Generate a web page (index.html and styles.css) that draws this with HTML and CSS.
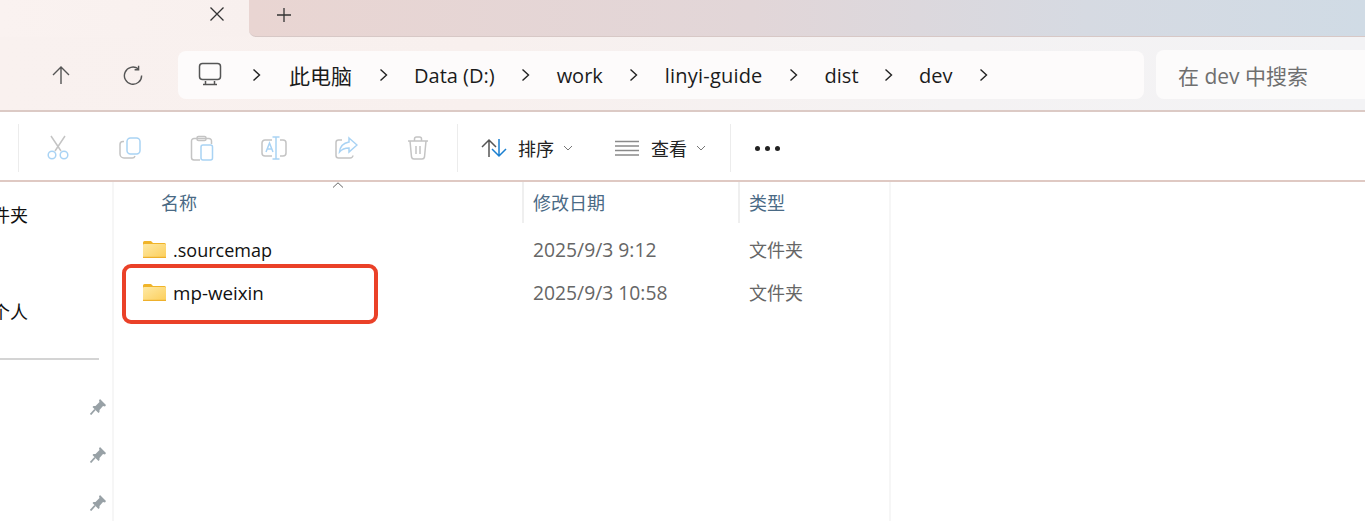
FILE: index.html
```html
<!DOCTYPE html>
<html lang="zh-CN">
<head>
<meta charset="utf-8">
<title>dev - 文件资源管理器</title>
<link rel="stylesheet" href="styles.css">
</head>
<body>
<div class="window">
  <header class="tabstrip">
    <div class="tab">
      <svg class="tab-close" width="16" height="16" viewBox="0 0 16 16"><path d="M1.5 1.5l13 13M14.5 1.5l-13 13"/></svg>
    </div>
    <div class="tab-rest">
      <svg class="tab-plus" width="16" height="16" viewBox="0 0 16 16"><path d="M8 1v14M1 8h14"/></svg>
    </div>
  </header>
  <nav class="navbar">
    <button class="nav-btn">
      <svg width="20" height="20" viewBox="0 0 20 20"><path d="M10 19V2M2 10l8-8 8 8"/></svg>
    </button>
    <button class="nav-btn">
      <svg width="20" height="20" viewBox="0 0 20 20"><path d="M15.2 3.8A8.6 8.6 0 1 0 18.6 10.5"/><path d="M15.6 0.8v4h-4"/></svg>
    </button>
    <div class="breadcrumb">
      <svg class="pc-icon" width="24" height="24" viewBox="0 0 24 24"><rect x="1.5" y="1.5" width="21" height="16" rx="3"/><path d="M7.5 19v3M16.5 19v3M5 22.500h14"/></svg>
      <span class="chev"><svg width="9" height="14" viewBox="0 0 9 14"><path d="M1.500 1.500l6 5.500-6 5.500"/></svg></span>
      <span class="crumb cjk">此电脑</span>
      <span class="chev"><svg width="9" height="14" viewBox="0 0 9 14"><path d="M1.500 1.500l6 5.500-6 5.500"/></svg></span>
      <span class="crumb">Data (D:)</span>
      <span class="chev"><svg width="9" height="14" viewBox="0 0 9 14"><path d="M1.500 1.500l6 5.500-6 5.500"/></svg></span>
      <span class="crumb">work</span>
      <span class="chev"><svg width="9" height="14" viewBox="0 0 9 14"><path d="M1.500 1.500l6 5.500-6 5.500"/></svg></span>
      <span class="crumb wide">linyi-guide</span>
      <span class="chev"><svg width="9" height="14" viewBox="0 0 9 14"><path d="M1.500 1.500l6 5.500-6 5.500"/></svg></span>
      <span class="crumb tight">dist</span>
      <span class="chev"><svg width="9" height="14" viewBox="0 0 9 14"><path d="M1.500 1.500l6 5.500-6 5.500"/></svg></span>
      <span class="crumb">dev</span>
      <span class="chev"><svg width="9" height="14" viewBox="0 0 9 14"><path d="M1.500 1.500l6 5.500-6 5.500"/></svg></span>
    </div>
    <div class="search">在 dev 中搜索</div>
  </nav>
  <div class="cmdbar">
    <span class="sep"></span>
    <div class="cmd-group">
      <span class="cmd-icon">
        <svg width="24" height="26" viewBox="0 0 24 26"><path class="g" d="M5 1l10 15M19 1L9 16"/><circle class="b" cx="6" cy="20" r="3.800"/><circle class="b" cx="18" cy="20" r="3.800"/></svg>
      </span>
      <span class="cmd-icon">
        <svg width="24" height="24" viewBox="0 0 24 24"><path class="g" d="M6 5.500H5a3 3 0 0 0-3 3V18a4 4 0 0 0 4 4h8a3 3 0 0 0 3-2"/><rect class="b" x="9" y="2" width="13" height="16" rx="3.500"/></svg>
      </span>
      <span class="cmd-icon">
        <svg width="24" height="26" viewBox="0 0 24 26"><path class="g" d="M10 25H4a2.500 2.500 0 0 1-2.500-2.500V6A2.500 2.500 0 0 1 4 3.500h15a2.500 2.500 0 0 1 2.500 2.500v3"/><rect class="g" x="7" y="1.500" width="9" height="4" rx="1.500"/><rect class="b" x="11" y="10" width="11.500" height="15" rx="2"/></svg>
      </span>
      <span class="cmd-icon">
        <svg width="26" height="24" viewBox="0 0 26 24"><path class="g" d="M11 4H4a3 3 0 0 0-3 3v10a3 3 0 0 0 3 3h7M19 4h3a3 3 0 0 1 3 3v10a3 3 0 0 1-3 3h-3"/><path class="b" d="M15 1v22M11.500 1h7M11.500 23h7M5 16l3.500-9L12 16M6.200 13h4.600"/></svg>
      </span>
      <span class="cmd-icon">
        <svg width="24" height="24" viewBox="0 0 24 24"><path class="g" d="M8 4H4.500A2.500 2.500 0 0 0 2 6.500v13A2.500 2.500 0 0 0 4.500 22H16a3 3 0 0 0 3-2.500"/><path class="b" d="M15 2l8 7-8 7v-4c-4 0-7 1-9.500 4 .5-5 4-9 9.500-10z"/></svg>
      </span>
      <span class="cmd-icon">
        <svg width="22" height="24" viewBox="0 0 22 24"><path class="g" d="M1 5h20M7.500 5V3a2 2 0 0 1 2-2h3a2 2 0 0 1 2 2v2M3 5l1.500 16a2.500 2.500 0 0 0 2.500 2h8a2.500 2.500 0 0 0 2.500-2L19 5M9 10v8M13 10v8"/></svg>
      </span>
    </div>
    <span class="sep"></span>
    <div class="cmd-text sort">
      <svg class="ico-sort" width="26" height="20" viewBox="0 0 26 20"><path d="M8 19V2M1 9l7-7 7 7" stroke="#555"/><path d="M18 1v17M11 11l7 7 7-7" stroke="#1a7fd0"/></svg>
      <span>排序</span>
      <svg class="mini" width="10" height="6" viewBox="0 0 10 6"><path d="M1 1l4 4 4-4"/></svg>
    </div>
    <div class="cmd-text view">
      <svg class="ico-view" width="24" height="16" viewBox="0 0 24 16"><path d="M0 1.500h24M0 6h24M0 10.500h24M0 15h24"/></svg>
      <span>查看</span>
      <svg class="mini" width="10" height="6" viewBox="0 0 10 6"><path d="M1 1l4 4 4-4"/></svg>
    </div>
    <span class="sep"></span>
    <div class="more"><i></i><i></i><i></i></div>
  </div>
  <div class="main">
    <aside class="sidebar">
      <div class="side-item first"><span>文件夹</span></div>
      <div class="side-item second"><span>个人</span></div>
      <div class="side-rule"></div>
      <div class="pin-row"><svg width="16" height="16" viewBox="0 0 16 16"><path class="pin-head" d="M10 0l6 6-1 1.500-2-.5-3.500 4v2l-1 1-6-6 1-1h2l4-4-.5-1.500z"/><path class="pin-needle" d="M5 10.500L.5 15.500"/></svg></div>
      <div class="pin-row"><svg width="16" height="16" viewBox="0 0 16 16"><path class="pin-head" d="M10 0l6 6-1 1.500-2-.5-3.500 4v2l-1 1-6-6 1-1h2l4-4-.5-1.500z"/><path class="pin-needle" d="M5 10.500L.5 15.500"/></svg></div>
      <div class="pin-row"><svg width="16" height="16" viewBox="0 0 16 16"><path class="pin-head" d="M10 0l6 6-1 1.500-2-.5-3.500 4v2l-1 1-6-6 1-1h2l4-4-.5-1.500z"/><path class="pin-needle" d="M5 10.500L.5 15.500"/></svg></div>
    </aside>
    <section class="list">
      <div class="list-head">
        <svg class="sort-caret" width="12" height="6" viewBox="0 0 12 6"><path d="M1 5.500L6 .8l5 4.700"/></svg>
        <div class="col col-name">名称</div>
        <div class="col col-date">修改日期</div>
        <div class="col col-type">类型</div>
      </div>
      <div class="row">
        <div class="cell col-name">
          <svg class="folder" width="23" height="17" viewBox="0 0 23 17"><defs><linearGradient id="fg" x1="0" y1="0" x2="1" y2="1"><stop offset="0" stop-color="#fee9a4"/><stop offset="1" stop-color="#fcce5a"/></linearGradient></defs><path d="M0 1.500A1.500 1.500 0 0 1 1.500 0H8l2 2h11.500A1.500 1.500 0 0 1 23 3.500V6H0z" fill="#f0b429"/><rect y="3" width="23" height="14" rx="1.200" fill="url(#fg)"/><rect y="15.800" width="23" height="1.200" fill="#eeb02c"/></svg>
          <span class="name">.sourcemap</span>
        </div>
        <div class="cell col-date">2025/9/3 9:12</div>
        <div class="cell col-type">文件夹</div>
      </div>
      <div class="row">
        <div class="cell col-name">
          <svg class="folder" width="23" height="17" viewBox="0 0 23 17"><path d="M0 1.500A1.500 1.500 0 0 1 1.500 0H8l2 2h11.500A1.500 1.500 0 0 1 23 3.500V6H0z" fill="#f0b429"/><rect y="3" width="23" height="14" rx="1.200" fill="url(#fg)"/><rect y="15.800" width="23" height="1.200" fill="#eeb02c"/></svg>
          <span class="name wider">mp-weixin</span>
        </div>
        <div class="cell col-date">2025/9/3 10:58</div>
        <div class="cell col-type">文件夹</div>
      </div>
      <div class="highlight"></div>
    </section>
  </div>
</div>
</body>
</html>
```

FILE: styles.css
```css
* { box-sizing: border-box; }
html, body { margin: 0; height: 100%; overflow: hidden; background: #fff; }
body { font-family: "Open Sans", "Noto Sans CJK SC", sans-serif; color: #1b1b1b; }
svg { display: block; fill: none; }
.window { display: flex; flex-direction: column; height: 521px; width: 1365px; overflow: hidden; }

.tabstrip { display: flex; height: 37px; background: #f9f1ef; flex: none; }
.tab { width: 249px; padding: 6px 0 0 209px; background: linear-gradient(90deg, #faf2f0, #f8f0ee); }
.tab-close path { stroke: #333; stroke-width: 1.300; }
.tab-rest { flex: 1; padding: 7px 0 0 27px; border-bottom: 1.500px solid #d7c8c6; border-bottom-left-radius: 7px;
  background: linear-gradient(90deg, #e9d5d2 0%, #e2d6d8 45%, #d6dae2 75%, #d0dbe5 100%); }
.tab-plus path { stroke: #333; stroke-width: 1.300; }

.navbar { display: flex; align-items: flex-start; height: 75px; flex: none; padding: 14px 0 0 41px;
  background: linear-gradient(90deg, #f9f1ef 0%, #f8f0ee 35%, #f4f2f3 70%, #f3f3f5 100%);
  border-bottom: 2px solid #dccac5; }
.nav-btn { width: 40px; height: 48px; padding: 0; margin-right: 32px; border: 0; background: none; display: flex; align-items: center; justify-content: center; flex: none; }
.nav-btn:nth-child(2) { margin-right: 25px; }
.nav-btn path { stroke: #555; stroke-width: 1.400; }
.breadcrumb { display: flex; flex: none; align-items: center; width: 966px; height: 48px; padding-left: 20px; border-radius: 8px; background: #fdfbfb; font-size: 20px; }
.pc-icon { margin-top: -2px; margin-right: 30px; flex: none; }
.pc-icon rect, .pc-icon path { stroke: #555; stroke-width: 1.500; }
.chev { flex: none; width: 9px; }
.chev path { stroke: #222; stroke-width: 1.400; }
.crumb { margin: 0 26.5px; white-space: nowrap; }
.crumb.cjk { margin-left: 28px; font-size: 21px; }
.crumb.wide { letter-spacing: .2px; }
.crumb.tight { margin-right: 25px; }
.search { width: 220px; height: 49px; margin: -1px 0 0 12px; padding-left: 22px; border-radius: 8px 0 0 8px; background: #fcfbfb; font-size: 21px; line-height: 52px; color: #6f6f6f; white-space: nowrap; flex: none; }

.cmdbar { display: flex; align-items: center; height: 70px; flex: none; padding: 4px 0 0 18px; background: #fff; border-bottom: 2px solid #dfc9c3; }
.sep { width: 1px; height: 48px; background: #ececec; flex: none; }
.cmd-group { display: flex; margin-left: 3px; margin-right: 3px; }
.cmd-icon { width: 72px; height: 40px; display: flex; align-items: center; justify-content: center; }
.cmd-icon .g { stroke: #c4c4c4; stroke-width: 1.500; }
.cmd-icon .b { stroke: #a9d3f4; stroke-width: 1.500; }
.cmd-text { display: flex; align-items: center; font-size: 18px; }
.cmd-text span { margin: 0 9px 0 12px; color: #222; }
.sort { margin-left: 23px; }
.sort span { margin-left: 11px; }
.view { margin-left: 42px; }
.ico-sort path { stroke-width: 1.500; }
.ico-view path { stroke: #8a8a8a; stroke-width: 1.500; }
.mini path { stroke: #777; stroke-width: 1; }
.view + .sep { margin-left: 24px; }
.more { display: flex; gap: 5px; margin-left: 24px; }
.more i { width: 5px; height: 5px; border-radius: 50%; background: #222; }

.main { display: flex; flex: 1; min-height: 0; }
.sidebar { width: 114px; flex: none; border-right: 2px solid #f6f6f6; display: flex; flex-direction: column; font-size: 18px; }
.side-item { width: 28px; display: flex; justify-content: flex-end; overflow: hidden; white-space: nowrap; line-height: 24px; color: #111; flex: none; }
.side-item.first { margin-top: 21px; }
.side-item.second { margin-top: 73px; }
.side-rule { width: 99px; height: 2px; background: #d4d4d4; margin-top: 34px; flex: none; }
.pin-row { height: 48px; display: flex; align-items: center; justify-content: flex-end; padding-right: 6px; flex: none; }
.pin-row:nth-child(4) { margin-top: 23px; }
.pin-head { fill: #98a1a6; }
.pin-needle { stroke: #98a1a6; stroke-width: 1.800; }

.list { position: relative; width: 777px; flex: none; border-right: 2px solid #f6f6f6; font-size: 18px; }
.list-head { display: flex; height: 41px; color: #4a6a85; }
.col { height: 41px; line-height: 42px; border-right: 2px solid #efefef; padding-left: 9px; }
.col-name { width: 410px; flex: none; }
.col-date { width: 216px; flex: none; }
.col-type { flex: 1; border-right: 0; }
.list-head .col-name { padding-left: 47px; }
.sort-caret { position: absolute; left: 218px; top: 0; }
.sort-caret path { stroke: #666; stroke-width: 1; }
.row { display: flex; height: 43px; align-items: center; color: #666; }
.row:nth-child(2) { margin-top: 5px; }
.cell { padding-left: 9px; white-space: nowrap; }
.cell.col-date { font-size: 19.300px; }
.cell.col-type { margin-bottom: 2px; }
.cell.col-name { display: flex; align-items: center; gap: 7px; padding-left: 29px; color: #111; }
.name.wider { font-size: 18.800px; }
.highlight { position: absolute; left: 8px; top: 82px; width: 256px; height: 60px; border: 4px solid #ea4128; border-radius: 9px; }
```
